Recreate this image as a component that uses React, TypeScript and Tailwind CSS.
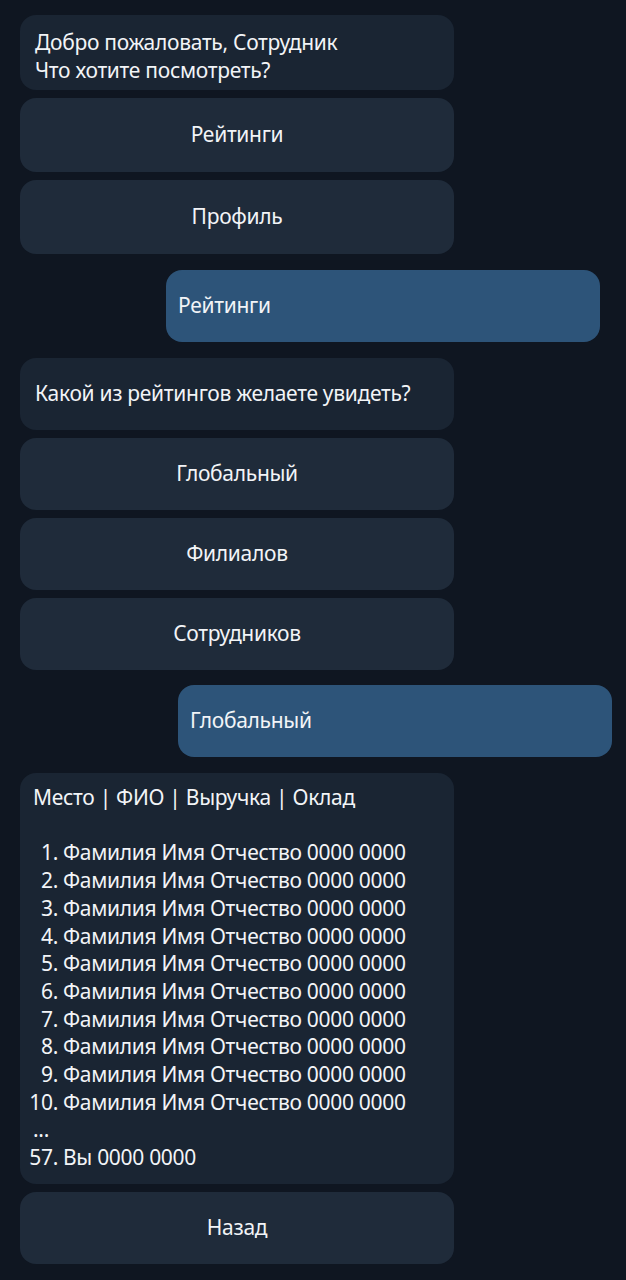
import React from "react";

const rows = Array.from({ length: 10 }, (_, i) => i + 1);

const KeyButton = ({ label, h }: { label: string; h: string }) => (
  <div className={`flex w-[434px] items-center justify-center rounded-2xl bg-[#1f2b3a] text-[#f2f4f7] ${h}`}>
    {label}
  </div>
);

const Mine = ({ label, offset }: { label: string; offset: string }) => (
  <div className={`flex h-[72px] w-[434px] items-center rounded-2xl bg-[#2d5479] px-3 text-[#f2f4f7] ${offset}`}>
    {label}
  </div>
);

export default function App() {
  return (
    <div
      className="min-h-[1280px] w-[626px] bg-[#0f1621] px-5 pt-[15px] text-[21px] tracking-[-0.3px]"
      style={{ fontFamily: '"Noto Sans", "Open Sans", sans-serif' }}
    >
      <div className="flex flex-col gap-2">
        <div className="w-[434px] rounded-2xl bg-[#1a2533] px-[15px] pb-[6px] pt-[13px] leading-[28px] text-[#f2f4f7]">
          Добро пожаловать, Сотрудник
          <br />
          Что хотите посмотреть?
        </div>
        <KeyButton label="Рейтинги" h="h-[74px]" />
        <KeyButton label="Профиль" h="h-[74px]" />
      </div>

      <div className="mt-4">
        <Mine label="Рейтинги" offset="ml-[146px]" />
      </div>

      <div className="mt-4 flex flex-col gap-2">
        <div className="flex h-[72px] w-[434px] items-center rounded-2xl bg-[#1a2533] px-[15px] text-[#f2f4f7]">
          Какой из рейтингов желаете увидеть?
        </div>
        <KeyButton label="Глобальный" h="h-[72px]" />
        <KeyButton label="Филиалов" h="h-[72px]" />
        <KeyButton label="Сотрудников" h="h-[72px]" />
      </div>

      <div className="mt-[15px]">
        <Mine label="Глобальный" offset="ml-[158px]" />
      </div>

      <div className="mt-4 flex flex-col gap-2">
        <div className="w-[434px] rounded-2xl bg-[#1a2533] pb-[12px] pl-[8px] pt-[11px] leading-[27.7px] text-[#f2f4f7]">
          <div className="pl-[5px]">Место | ФИО | Выручка | Оклад</div>
          <div className="h-[27.7px]" />
          {rows.map((n) => (
            <div key={n} className="flex">
              <span className="w-[30px] text-right">{n}.</span>
              <span className="pl-[5px]">Фамилия Имя Отчество 0000 0000</span>
            </div>
          ))}
          <div className="pl-[5px]">...</div>
          <div className="flex">
            <span className="w-[30px] text-right">57.</span>
            <span className="pl-[5px]">Вы 0000 0000</span>
          </div>
        </div>
        <KeyButton label="Назад" h="h-[72px]" />
      </div>
    </div>
  );
}
